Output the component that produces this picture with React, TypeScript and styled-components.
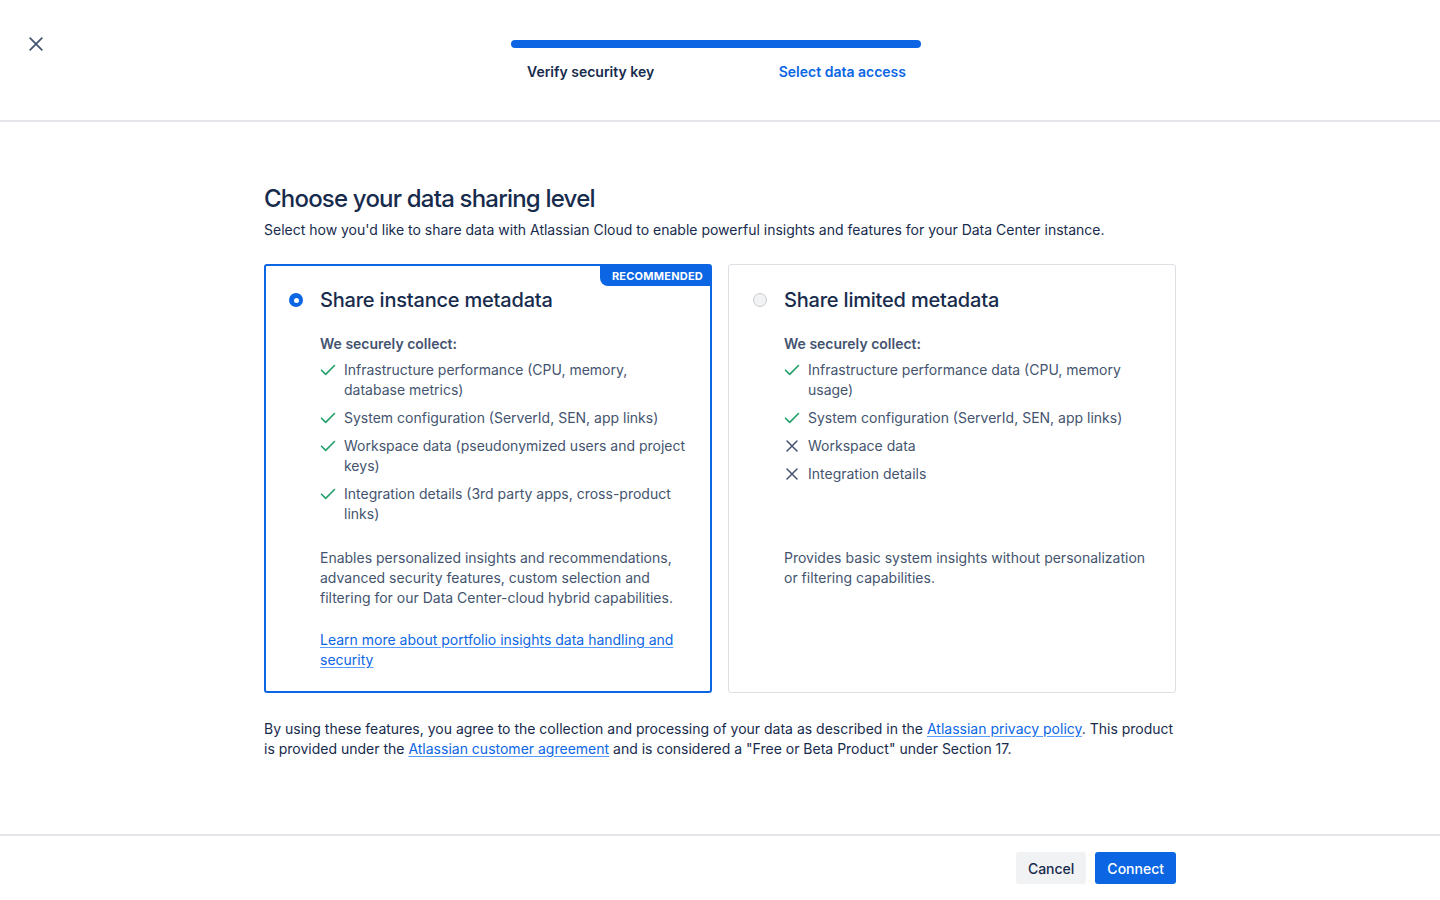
import styled, { createGlobalStyle } from 'styled-components';

const GlobalStyle = createGlobalStyle`
  * {
    box-sizing: border-box;
  }
  body {
    margin: 0;
    background: #ffffff;
    font-family: Inter, 'Liberation Sans', Arial, sans-serif;
    color: #172b4d;
    -webkit-font-smoothing: antialiased;
  }
`;

const Page = styled.div`
  display: flex;
  flex-direction: column;
  min-height: 100vh;
`;

const Header = styled.header`
  position: relative;
  height: 122px;
  border-bottom: 2px solid #e4e5e8;
  display: flex;
  justify-content: center;
  padding-top: 40px;
`;

const CloseButton = styled.button`
  position: absolute;
  left: 24px;
  top: 32px;
  width: 24px;
  height: 24px;
  padding: 0;
  border: none;
  background: none;
  display: flex;
  align-items: center;
  justify-content: center;
  color: #44546f;
  cursor: pointer;
`;

const Progress = styled.div`
  width: 410px;
  margin-right: 8px;
  display: flex;
  flex-direction: column;
`;

const Track = styled.div`
  height: 8px;
  border-radius: 4px;
  background: #0c66e4;
`;

const Steps = styled.div`
  display: flex;
  justify-content: space-between;
  padding: 14px 15px 0 16px;
`;

const Step = styled.span<{ $active?: boolean }>`
  font-size: 14px;
  line-height: 20px;
  font-weight: 600;
  color: ${(p) => (p.$active ? '#0c66e4' : '#172b4d')};
`;

const Main = styled.main`
  flex: 1;
  display: flex;
  justify-content: center;
  padding-top: 63px;
`;

const Content = styled.div`
  width: 912px;
`;

const Title = styled.h1`
  margin: 0 0 7px;
  font-size: 24px;
  line-height: 28px;
  font-weight: 500;
  color: #172b4d;
  letter-spacing: -0.8px;
`;

const Lead = styled.p`
  margin: 0 0 24px;
  font-size: 14px;
  line-height: 20px;
  color: #172b4d;
`;

const Cards = styled.div`
  display: grid;
  grid-template-columns: 1fr 1fr;
  gap: 16px;
`;

const Card = styled.div<{ $selected?: boolean }>`
  position: relative;
  border: ${(p) => (p.$selected ? '2px solid #0c66e4' : '1px solid #dcdfe4')};
  border-radius: 3px;
  padding: ${(p) => (p.$selected ? '22px 22px 21px' : '23px 23px 22px')};
  cursor: pointer;
`;

const Badge = styled.span`
  position: absolute;
  top: -1px;
  right: 0;
  height: 21px;
  padding: 0 7px 0 12px;
  display: flex;
  align-items: center;
  background: #0c66e4;
  color: #ffffff;
  font-size: 11px;
  font-weight: 700;
  letter-spacing: 0.02em;
  border-bottom-left-radius: 8px;
`;

const CardHead = styled.div`
  display: flex;
  align-items: center;
  gap: 17px;
`;

const Radio = styled.span<{ $checked?: boolean }>`
  flex: none;
  width: 14px;
  height: 14px;
  margin-left: 1px;
  border-radius: 50%;
  background: ${(p) => (p.$checked ? '#0c66e4' : '#f1f2f4')};
  border: ${(p) => (p.$checked ? 'none' : '1.5px solid #c7cbd2')};
  display: flex;
  align-items: center;
  justify-content: center;
  &::after {
    content: '';
    display: ${(p) => (p.$checked ? 'block' : 'none')};
    width: 5px;
    height: 5px;
    border-radius: 50%;
    background: #ffffff;
  }
`;

const CardTitle = styled.h2`
  margin: 0;
  font-size: 20px;
  line-height: 24px;
  font-weight: 500;
  color: #172b4d;
  letter-spacing: -0.2px;
`;

const CardBody = styled.div`
  padding-left: 32px;
  margin-top: 22px;
`;

const Collect = styled.div`
  min-height: 190px;
`;

const CollectLabel = styled.p`
  margin: 0 0 6px;
  font-size: 14px;
  line-height: 20px;
  font-weight: 600;
  color: #44546f;
`;

const List = styled.ul`
  margin: 0;
  padding: 0;
  list-style: none;
  display: flex;
  flex-direction: column;
  gap: 8px;
`;

const Item = styled.li`
  display: flex;
  gap: 8px;
  font-size: 14px;
  line-height: 20px;
  color: #44546f;
`;

const ItemIcon = styled.span`
  flex: none;
  width: 16px;
  height: 20px;
  display: flex;
  align-items: center;
  justify-content: center;
`;

const Description = styled.p`
  margin: 24px 0 0;
  font-size: 14px;
  line-height: 20px;
  color: #44546f;
`;

const Link = styled.a`
  color: #0c66e4;
  text-decoration: underline;
  text-underline-offset: 2px;
  text-decoration-color: #579dff;
`;

const LearnMore = styled.p`
  margin: 22px 0 0;
  font-size: 14px;
  line-height: 20px;
`;

const Legal = styled.p`
  margin: 26px 0 0;
  font-size: 14px;
  line-height: 20px;
  color: #172b4d;
`;

const Footer = styled.footer`
  height: 66px;
  border-top: 2px solid #e4e5e8;
  display: flex;
  justify-content: flex-end;
  align-items: flex-start;
  gap: 9px;
  padding: 16px 264px 0 0;
`;

const Button = styled.button<{ $primary?: boolean }>`
  height: 32px;
  padding: 0 12px;
  border: none;
  border-radius: 3px;
  font-family: inherit;
  font-size: 14px;
  font-weight: 500;
  background: ${(p) => (p.$primary ? '#0c66e4' : '#f1f2f4')};
  color: ${(p) => (p.$primary ? '#ffffff' : '#172b4d')};
  cursor: pointer;
`;

const Check = () => (
  <svg width="16" height="12" viewBox="0 0 16 12" fill="none">
    <path d="M1.5 6.2l4.2 4.2L14.5 1.5" stroke="#22a06b" strokeWidth="1.6" strokeLinecap="round" strokeLinejoin="round" />
  </svg>
);

const Cross = ({ size = 12, color = '#44546f' }: { size?: number; color?: string }) => (
  <svg width={size} height={size} viewBox="0 0 12 12" fill="none">
    <path d="M1 1l10 10M11 1L1 11" stroke={color} strokeWidth="1.5" strokeLinecap="round" />
  </svg>
);

type Entry = { text: string; ok: boolean };

const fullItems: Entry[] = [
  { text: 'Infrastructure performance (CPU, memory, database metrics)', ok: true },
  { text: 'System configuration (ServerId, SEN, app links)', ok: true },
  { text: 'Workspace data (pseudonymized users and project keys)', ok: true },
  { text: 'Integration details (3rd party apps, cross-product links)', ok: true },
];

const limitedItems: Entry[] = [
  { text: 'Infrastructure performance data (CPU, memory usage)', ok: true },
  { text: 'System configuration (ServerId, SEN, app links)', ok: true },
  { text: 'Workspace data', ok: false },
  { text: 'Integration details', ok: false },
];

function Entries({ items }: { items: Entry[] }) {
  return (
    <List>
      {items.map((it) => (
        <Item key={it.text}>
          <ItemIcon>{it.ok ? <Check /> : <Cross size={12} />}</ItemIcon>
          <span>{it.text}</span>
        </Item>
      ))}
    </List>
  );
}

export default function App() {
  return (
    <Page>
      <GlobalStyle />
      <Header>
        <CloseButton aria-label="Close">
          <Cross size={14} color="#44546f" />
        </CloseButton>
        <Progress>
          <Track />
          <Steps>
            <Step>Verify security key</Step>
            <Step $active>Select data access</Step>
          </Steps>
        </Progress>
      </Header>
      <Main>
        <Content>
          <Title>Choose your data sharing level</Title>
          <Lead>
            Select how you'd like to share data with Atlassian Cloud to enable powerful insights and features for your
            Data Center instance.
          </Lead>
          <Cards>
            <Card $selected>
              <Badge>RECOMMENDED</Badge>
              <CardHead>
                <Radio $checked />
                <CardTitle>Share instance metadata</CardTitle>
              </CardHead>
              <CardBody>
                <Collect>
                  <CollectLabel>We securely collect:</CollectLabel>
                  <Entries items={fullItems} />
                </Collect>
                <Description>
                  Enables personalized insights and recommendations, advanced security features, custom selection and
                  filtering for our Data Center-cloud hybrid capabilities.
                </Description>
                <LearnMore>
                  <Link href="#">Learn more about portfolio insights data handling and security</Link>
                </LearnMore>
              </CardBody>
            </Card>
            <Card>
              <CardHead>
                <Radio />
                <CardTitle>Share limited metadata</CardTitle>
              </CardHead>
              <CardBody>
                <Collect>
                  <CollectLabel>We securely collect:</CollectLabel>
                  <Entries items={limitedItems} />
                </Collect>
                <Description>
                  Provides basic system insights without personalization or filtering capabilities.
                </Description>
              </CardBody>
            </Card>
          </Cards>
          <Legal>
            By using these features, you agree to the collection and processing of your data as described in the{' '}
            <Link href="#">Atlassian privacy policy</Link>. This product is provided under the{' '}
            <Link href="#">Atlassian customer agreement</Link> and is considered a "Free or Beta Product" under Section
            17.
          </Legal>
        </Content>
      </Main>
      <Footer>
        <Button>Cancel</Button>
        <Button $primary>Connect</Button>
      </Footer>
    </Page>
  );
}
